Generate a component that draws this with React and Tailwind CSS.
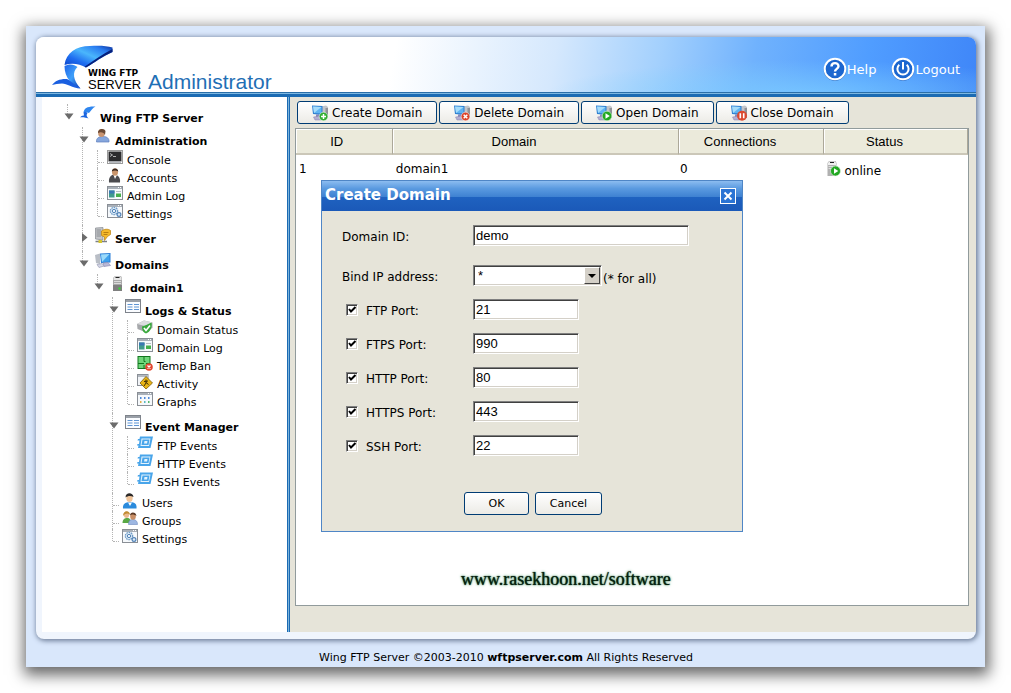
import React, { useState } from 'react';

const WingLogo = ({ className }) => (
  <svg viewBox="0 0 62 44" className={className} aria-hidden="true">
    <defs>
      <linearGradient id="wingTop" x1="0" y1="1" x2="1" y2="0">
        <stop offset="0" stopColor="#0a3fc4" />
        <stop offset="0.3" stopColor="#1f6df0" />
        <stop offset="0.55" stopColor="#4ab6fc" />
        <stop offset="0.8" stopColor="#2a7cf0" />
        <stop offset="1" stopColor="#0b2f9c" />
      </linearGradient>
      <linearGradient id="wingTail" x1="0" y1="0" x2="1" y2="1">
        <stop offset="0" stopColor="#1d63e8" />
        <stop offset="0.5" stopColor="#3fa0fa" />
        <stop offset="1" stopColor="#0c38b0" />
      </linearGradient>
    </defs>
    <path d="M12.500 20C14 8 24 1 38 1C46 0.500 54 0.500 60.500 2.500L60.500 7C51 11 42 18 34 22.500C28 19 20 17.500 12.500 20Z" fill="url(#wingTop)" />
    <path d="M60.500 4V7C51 11 42 18 34 22.500L32.500 21.700C41 16 51 9 60.500 4Z" fill="#06207c" />
    <path d="M12.500 21C17 18.500 22 19 25.500 22C20 27 21 35 28.500 43.500C20 40 12.500 33 12.500 21Z" fill="url(#wingTail)" />
    <path d="M0 40C3 35.500 9 33.500 15 34C19 36 23 40 28.500 43.500C20 43 15 38.500 10 38.500C6 38.500 3 39.500 0 40Z" fill="#1a5fe0" />
  </svg>
);

const HelpIcon = () => (
  <svg viewBox="0 0 24 24" className="h-6 w-6" aria-hidden="true">
    <circle cx="12" cy="12.500" r="11.300" fill="#0d3f93" opacity="0.6" />
    <circle cx="12" cy="12" r="10.300" fill="#1c66cf" stroke="#fff" strokeWidth="2" />
    <path d="M8.500 9.500C8.500 5 15.500 5 15.500 9.300C15.500 11.800 12 12 12 14.500" fill="none" stroke="#fff" strokeWidth="2.400" />
    <rect x="10.800" y="16" width="2.500" height="2.500" fill="#fff" />
  </svg>
);

const PowerIcon = () => (
  <svg viewBox="0 0 24 24" className="h-6 w-6" aria-hidden="true">
    <circle cx="12" cy="12.500" r="11.300" fill="#0d3f93" opacity="0.6" />
    <circle cx="12" cy="12" r="10.300" fill="#1c66cf" stroke="#fff" strokeWidth="2" />
    <path d="M8.300 7.800A5.600 5.600 0 1 0 15.700 7.800" fill="none" stroke="#fff" strokeWidth="2" />
    <path d="M12 5V12.500" stroke="#fff" strokeWidth="2" />
  </svg>
);

const windowFrame = (
  <>
    <rect x="0.500" y="0.500" width="15" height="13" fill="#f6f9fc" stroke="#8a8f96" />
    <rect x="1" y="1" width="14" height="2" fill="#a9b0b8" />
    <rect x="11" y="1" width="1" height="1" fill="#fff" />
    <rect x="13" y="1" width="1" height="1" fill="#fff" />
  </>
);

const computer = (
  <>
    <path d="M9 1.500L14 0.500L16 2V13H9Z" fill="#c3c5c9" />
    <path d="M13.500 3H16V13H13.500Z" fill="#8f9298" />
    <path d="M4 9.500H9V12H4Z" fill="#8b86b8" />
    <path d="M0 0.500L10.500 1V10L1 9Z" fill="#2f7fd0" />
    <path d="M1 1.500L9.500 2V8.500L2 8Z" fill="#5fb4f2" />
    <path d="M1 1.500L9.500 2L2 8Z" fill="#a5dcfb" />
    <path d="M1.500 12L8 11L9 15H3Z" fill="#b3aed2" stroke="#8580ad" strokeWidth="0.500" />
  </>
);

const drawings = {
  wing: (
    <g>
      <path d="M3.500 6.500C4 2 8 0 15.500 0.500C12.500 2 11 4.500 9 7C7 6 5 6 3.500 6.500Z" fill="#2f86ef" />
      <path d="M3.500 6.500C5 5.800 6.500 6 7.500 7C6 9 6.500 10.500 8.500 12.500C6.500 12 3 11 0 11.500C1 10 2.500 9.300 4 9.500Z" fill="#1b66e0" />
    </g>
  ),
  admin: (
    <g>
      <path d="M1.500 13C1 9 4 7.500 8 7.500C12 7.500 14.500 9.500 14 13Z" fill="#86a6dc" stroke="#5f7fbd" strokeWidth="0.700" />
      <ellipse cx="6.500" cy="4" rx="3.400" ry="4" fill="#c99470" />
      <path d="M3 4C2.500 -0.500 9.500 -1.500 10.500 2L10 6C9 3.500 6 2.500 3 4Z" fill="#6b4a35" />
    </g>
  ),
  console: (
    <g>
      <rect x="0.500" y="0.500" width="15" height="13" fill="#fff" stroke="#9a9a9a" />
      <rect x="1.500" y="1.500" width="13" height="10" fill="#2c2c2e" />
      <path d="M3 3.500L5.500 5L3 6.500M6 6.500H9" stroke="#d5d5d5" fill="none" strokeWidth="0.800" />
      <rect x="2" y="11.500" width="12" height="1.500" fill="#b9bcc1" />
    </g>
  ),
  accounts: (
    <g>
      <path d="M2 14.500C1.500 9 4 7 7 6.500C11 7 13.500 9 13 14.500Z" fill="#4b4b4f" />
      <path d="M6.500 7L8 11L10 7Z" fill="#fff" />
      <ellipse cx="8" cy="4" rx="3" ry="3.800" fill="#c9956c" />
      <path d="M4.800 3.500C5 -0.500 11 -0.500 11.300 3.500C9 2 7 2 4.800 3.500Z" fill="#3b2a22" />
    </g>
  ),
  log: (
    <g>
      {windowFrame}
      <rect x="2" y="4.500" width="5.500" height="7" fill="#3f9a8c" />
      <rect x="2" y="4.500" width="5.500" height="3" fill="#3a78b3" />
      <rect x="9" y="5" width="5" height="1" fill="#b6bcc4" />
      <rect x="9" y="7.500" width="5" height="3.500" fill="#46b04c" />
    </g>
  ),
  settings: (
    <g>
      {windowFrame}
      <circle cx="7" cy="7" r="3.600" fill="#e6f1fb" stroke="#6f9cc7" strokeWidth="1.400" strokeDasharray="1.600 0.700" />
      <circle cx="7" cy="7" r="1.700" fill="none" stroke="#5585b8" />
      <circle cx="12" cy="10.500" r="1.900" fill="#dcebf9" stroke="#5585b8" strokeWidth="1.200" />
    </g>
  ),
  server: (
    <g>
      <path d="M0.500 1L8 0.500V13L0.500 12Z" fill="#c3c5c8" stroke="#85898f" strokeWidth="0.700" />
      <path d="M1.500 3H6M1.500 5H6M1.500 7H6M1.500 9H6" stroke="#7c8086" strokeWidth="0.800" />
      <path d="M0.500 14.500H12" stroke="#7c8086" strokeWidth="1.400" />
      <rect x="3.500" y="13" width="3.500" height="3" fill="#d5c52c" />
      <path d="M6.500 4C9 2 13 1.500 15.500 3.500V7.500L12.500 9.500L9.500 13.500V10L6.500 8.500Z" fill="#f5b92b" stroke="#b9800f" strokeWidth="0.700" />
      <path d="M8.500 5.500H13.500M8.500 7.500H12.500" stroke="#a8700a" strokeWidth="0.800" />
    </g>
  ),
  domains: (
    <g>
      <path d="M0 2L5 0.500V11L1 10Z" fill="#b9bec6" />
      <path d="M5 0.500L15.500 0V9.500L6 10Z" fill="#2b7fd8" />
      <path d="M6 1.500L14.500 1V8.500L7 9Z" fill="#3fa2ec" />
      <path d="M6 1.500L14.500 1L7 9Z" fill="#9bdafa" />
      <path d="M8 10L13 9.500L15.500 12.500L9 13.500Z" fill="#b9b9d8" stroke="#8f8fb8" strokeWidth="0.700" />
      <path d="M2 11.500L7 10.500L9 13L4 14.500Z" fill="#d5d6e6" stroke="#9b9fb8" strokeWidth="0.700" />
    </g>
  ),
  tower: (
    <g>
      <path d="M3 2L5 0H11L12 2V15H3Z" fill="#a9a9a9" />
      <path d="M3.500 2L5 0.500H10.500L11.500 2V4H3.500Z" fill="#e6e6e6" />
      <rect x="5.500" y="1" width="4" height="1" fill="#222" />
      <path d="M4 5.500H11M4 7.500H11" stroke="#dcdcdc" />
      <rect x="3" y="9" width="9" height="6" fill="#7f7f7f" />
      <rect x="8.500" y="11.500" width="2" height="2" fill="#2fe02f" />
    </g>
  ),
  list: (
    <g>
      <rect x="0.500" y="0.500" width="15" height="13" fill="#fafcff" stroke="#7e838b" />
      <rect x="1" y="1" width="14" height="2" fill="#9aa0a8" />
      <path d="M2.500 5.500H7.500M2.500 8H7.500M2.500 10.500H7.500M9 5.500H14M9 8H14M9 10.500H14" stroke="#5f95d4" />
    </g>
  ),
  status: (
    <g>
      <path d="M0 4L7 0.500L15.500 2.500V8L8 12L0.500 9Z" fill="#a6a8ab" />
      <path d="M0 4L7 0.500L15.500 2.500L8 6Z" fill="#dcdddf" />
      <path d="M5 6.500C8 6 12 3.500 14.500 2.500C15.500 8 13 12 9 13.500C6 12.500 5 10 5 6.500Z" fill="#39a93c" />
      <path d="M7 8L9 10.500L13 5.500" fill="none" stroke="#fff" strokeWidth="1.600" />
    </g>
  ),
  ban: (
    <g>
      <rect x="1" y="0.500" width="12" height="12" fill="#6fd67a" stroke="#12761f" />
      <path d="M7 1V5.500H8.500M1 7.500H7M9 7.500H13M7 9V12" stroke="#12761f" fill="none" />
      <circle cx="12" cy="11" r="3.800" fill="#e2472f" />
      <path d="M10.500 9.500L13.500 12.500M13.500 9.500L10.500 12.500" stroke="#fff" strokeWidth="1.300" />
    </g>
  ),
  activity: (
    <g>
      <rect x="0.500" y="0.500" width="10.500" height="11" fill="#f2f4f7" stroke="#8a8f96" />
      <rect x="1" y="1" width="9.500" height="2" fill="#b3b9c1" />
      <path d="M9 2.500L15.500 9L9 15L3 9Z" fill="#e8b417" stroke="#7d5d07" strokeWidth="0.800" />
      <path d="M9 5.500L9 9L7 12M9 8.500L11.500 10.500M7 7.500L11 7" fill="none" stroke="#3b2c05" />
    </g>
  ),
  graphs: (
    <g>
      {windowFrame}
      <path d="M3 6H4.500M7 6H8.500M11 6H12.500" stroke="#4f88d8" strokeWidth="2" />
      <path d="M3 10H4.500" stroke="#e2b04a" strokeWidth="2" />
      <path d="M7 10H8.500" stroke="#58b8c0" strokeWidth="2" />
      <path d="M11 10H12.500" stroke="#59b86a" strokeWidth="2" />
    </g>
  ),
  event: (
    <g>
      <path d="M3 0.500H16L13.500 12H1L1.500 9.500H0L0.500 8H2L2.500 4.500H0.500L1 3H2.500Z" fill="#49a5ea" />
      <path d="M4.500 2.500H13.500L12 10H3.500Z" fill="#e4f3fd" />
      <path d="M5.500 3.500H12.500L11.500 9H4.500Z" fill="#49a5ea" />
      <path d="M7.500 5H10.500L10 7.500H7Z" fill="#e4f3fd" />
    </g>
  ),
  user: (
    <g>
      <path d="M1 15.500C0.500 11 3 9.500 8 9C13 9.500 15 11 14.500 15.500Z" fill="#2b8bdc" />
      <path d="M6 9.500L8 13L10 9.500Z" fill="#fff" />
      <ellipse cx="7.500" cy="5" rx="3.200" ry="4" fill="#f0c49a" />
      <path d="M3.500 4.500C3.500 -1 11 -1 11.500 4C9 2.500 6 2.500 3.500 4.500Z" fill="#2d2a29" />
    </g>
  ),
  groups: (
    <g>
      <path d="M0.500 12C0.500 8 3 7 5 7C8 7 9 9 9 12Z" fill="#59a845" />
      <path d="M6.500 13.500C6.500 9.500 8.500 8.500 11 8.500C14 8.500 15.500 10.500 15.500 13.500Z" fill="#9db7e2" stroke="#6d8ac0" strokeWidth="0.600" />
      <ellipse cx="4.500" cy="3.800" rx="2.600" ry="3.300" fill="#eab98e" />
      <path d="M1 5C1 -1 8 -1 8 4C6 2 4 2 1 5Z" fill="#c18c33" />
      <ellipse cx="11" cy="5.500" rx="2.800" ry="3.300" fill="#c98f66" />
      <path d="M8 4.500C8 0.500 14 0.500 14.500 5C12 3.500 10 3 8 4.500Z" fill="#5d3a26" />
    </g>
  ),
  create: (
    <g>
      {computer}
      <circle cx="11.500" cy="11.500" r="4.300" fill="#2fae2f" stroke="#fff" strokeWidth="0.500" />
      <path d="M9 11.500H14M11.500 9V14" stroke="#fff" strokeWidth="1.500" />
    </g>
  ),
  remove: (
    <g>
      {computer}
      <circle cx="11.500" cy="11.500" r="4.300" fill="#dc4328" stroke="#fff" strokeWidth="0.500" />
      <path d="M9.700 9.700L13.300 13.300M13.300 9.700L9.700 13.300" stroke="#fff" strokeWidth="1.500" />
    </g>
  ),
  open: (
    <g>
      {computer}
      <circle cx="11" cy="11" r="4.800" fill="#22a822" stroke="#e3f5e0" strokeWidth="0.600" />
      <path d="M9.500 8.300L13.800 11L9.500 13.700Z" fill="#fff" />
    </g>
  ),
  close: (
    <g>
      {computer}
      <circle cx="11" cy="10.800" r="5" fill="#dc4a30" />
      <path d="M9.300 8.300V13.300M12.700 8.300V13.300" stroke="#fff" strokeWidth="1.600" />
    </g>
  ),
  online: (
    <g>
      <path d="M0.500 2L2 0H8.500L9.500 2V15H0.500Z" fill="#b0b0b0" />
      <path d="M1 2L2.500 0.500H8L9 2V4H1Z" fill="#efefef" />
      <rect x="3" y="1" width="4" height="1" fill="#222" />
      <path d="M1.500 5.500H8M1.500 7.500H8" stroke="#dcdcdc" />
      <circle cx="8.500" cy="10" r="5" fill="#22a822" stroke="#e3f5e0" strokeWidth="0.600" />
      <path d="M7 7.300L11.300 10L7 12.700Z" fill="#fff" />
    </g>
  )
};

const Icon = ({ name, className = '' }) => (
  <svg viewBox="0 0 16 16" className={`h-4 w-4 shrink-0 overflow-visible ${className}`} aria-hidden="true">
    {drawings[name]}
  </svg>
);

const tree = [
  {
    label: 'Wing FTP Server',
    icon: 'wing',
    children: [
      {
        label: 'Administration',
        icon: 'admin',
        children: [
          { label: 'Console', icon: 'console' },
          { label: 'Accounts', icon: 'accounts' },
          { label: 'Admin Log', icon: 'log' },
          { label: 'Settings', icon: 'settings' }
        ]
      },
      { label: 'Server', icon: 'server', collapsed: true, children: [] },
      {
        label: 'Domains',
        icon: 'domains',
        children: [
          {
            label: 'domain1',
            icon: 'tower',
            children: [
              {
                label: 'Logs & Status',
                icon: 'list',
                children: [
                  { label: 'Domain Status', icon: 'status' },
                  { label: 'Domain Log', icon: 'log' },
                  { label: 'Temp Ban', icon: 'ban' },
                  { label: 'Activity', icon: 'activity' },
                  { label: 'Graphs', icon: 'graphs' }
                ]
              },
              {
                label: 'Event Manager',
                icon: 'list',
                children: [
                  { label: 'FTP Events', icon: 'event' },
                  { label: 'HTTP Events', icon: 'event' },
                  { label: 'SSH Events', icon: 'event' }
                ]
              },
              { label: 'Users', icon: 'user' },
              { label: 'Groups', icon: 'groups' },
              { label: 'Settings', icon: 'settings' }
            ]
          }
        ]
      }
    ]
  }
];

const TreeNode = ({ node, last }) => {
  const [open, setOpen] = useState(!node.collapsed);

  if (!node.children) {
    return (
      <li className="relative flex h-[18px] items-start gap-1 pl-[13px]">
        <span className={`absolute left-[3px] top-0 border-l border-dotted border-[#b4b4b4] ${last ? 'h-3' : 'h-full'}`} />
        <span className="absolute left-1 top-3 w-[6px] border-t border-dotted border-[#b4b4b4]" />
        <Icon name={node.icon} />
        <a href="#" className="text-[11px] leading-[22px] whitespace-nowrap">{node.label}</a>
      </li>
    );
  }

  const leavesOnly = node.children.every((child) => !child.children);

  return (
    <li className={leavesOnly ? 'relative pb-[3px]' : 'relative'}>
      <span className={`absolute left-[3px] top-0 border-l border-dotted border-[#b4b4b4] ${last ? 'h-3' : 'h-full'}`} />
      <div className="flex h-[23px] items-start">
        <button
          type="button"
          aria-label={`Toggle ${node.label}`}
          onClick={() => setOpen(!open)}
          className="relative mt-2 mr-[6px] flex h-[10px] w-[10px] items-center justify-center"
        >
          <svg viewBox="0 0 10 10" className="h-[10px] w-[10px]" aria-hidden="true">
            <path d={open ? 'M0.500 1.500H9.500L5 7.500Z' : 'M3 0L8.500 4.500L3 9Z'} fill="#6b6b6b" />
          </svg>
        </button>
        <Icon name={node.icon} className="mt-[2px]" />
        <a href="#" className="ml-1 text-[11px] leading-[30px] font-bold whitespace-nowrap">{node.label}</a>
      </div>
      {open && (
        <ul className="ml-[15px]">
          {node.children.map((child, index) => (
            <TreeNode key={child.label} node={child} last={index === node.children.length - 1} />
          ))}
        </ul>
      )}
    </li>
  );
};

const toolbar = [
  { label: 'Create Domain', icon: 'create' },
  { label: 'Delete Domain', icon: 'remove' },
  { label: 'Open Domain', icon: 'open' },
  { label: 'Close Domain', icon: 'close' }
];

const ports = [
  { id: 'ftp', label: 'FTP Port:', value: '21' },
  { id: 'ftps', label: 'FTPS Port:', value: '990' },
  { id: 'http', label: 'HTTP Port:', value: '80' },
  { id: 'https', label: 'HTTPS Port:', value: '443' },
  { id: 'ssh', label: 'SSH Port:', value: '22' }
];

const buttonStyle = 'rounded-[3px] border border-[#003c74] bg-gradient-to-b from-white to-[#ecebe6]';
const fieldStyle =
  'h-[21px] border border-t-[#808080] border-l-[#808080] border-r-white border-b-white bg-white px-[2px] font-["Liberation_Sans",sans-serif] text-[13px] shadow-[inset_1px_1px_0_#404040,inset_-1px_-1px_0_#d4d0c8] outline-none';

const CreateDomainDialog = ({ onClose }) => (
  <form
    role="dialog"
    aria-label="Create Domain"
    onSubmit={(e) => e.preventDefault()}
    className="absolute left-[25px] top-[51px] w-[422px] border border-[#4f86c6] bg-[#e6e4d9]"
  >
    <div className="flex h-[30px] items-center justify-between bg-[linear-gradient(to_bottom,#8cbcf0_0%,#5a9ae0_25%,#3f82d2_52%,#1f62c0_54%,#1b59b8_100%)] pl-[3px] pr-[6px]">
      <h2 className="pb-[2px] text-[15px] font-bold text-white">Create Domain</h2>
      <button
        type="button"
        aria-label="Close dialog"
        onClick={onClose}
        className="flex h-4 w-4 items-center justify-center border border-white bg-[#2a74d4]"
      >
        <svg viewBox="0 0 10 10" className="h-[10px] w-[10px]" aria-hidden="true">
          <path d="M1.500 1.500L8.500 8.500M8.500 1.500L1.500 8.500" stroke="#fff" strokeWidth="2" />
        </svg>
      </button>
    </div>

    <div className="px-5 pt-[14px] pb-4 text-[12px]">
      <div className="flex h-[21px] items-center">
        <label htmlFor="domain-id" className="w-[131px] pt-[2px]">Domain ID:</label>
        <input id="domain-id" type="text" defaultValue="demo" className={`${fieldStyle} w-[216px]`} />
      </div>

      <div className="mt-[19px] flex h-[21px] items-center">
        <label htmlFor="bind-ip" className="w-[131px] pt-[2px]">Bind IP address:</label>
        <div className="grid w-[129px]">
          <select id="bind-ip" className={`${fieldStyle} col-start-1 row-start-1 w-full appearance-none pl-1`}>
            <option>*</option>
          </select>
          <span className="pointer-events-none col-start-1 row-start-1 mr-[2px] flex h-[17px] w-4 items-center justify-center self-center justify-self-end border border-t-white border-l-white border-r-[#404040] border-b-[#404040] bg-[#d4d0c8]">
            <svg viewBox="0 0 8 4" className="h-1 w-2" aria-hidden="true">
              <path d="M0 0H8L4 4Z" fill="#000" />
            </svg>
          </span>
        </div>
        <span className="ml-[1px] pt-[6px]">(* for all)</span>
      </div>

      <div className="mt-[13px] space-y-[13px]">
        {ports.map((port) => (
          <div key={port.id} className="flex h-[21px] items-center">
            <div className="flex w-[131px] items-center gap-2 pl-1">
              <span className="grid h-3 w-3">
                <input
                  id={`${port.id}-enabled`}
                  type="checkbox"
                  defaultChecked
                  className="peer col-start-1 row-start-1 h-3 w-3 appearance-none border border-t-[#808080] border-l-[#808080] border-r-white border-b-white bg-white shadow-[inset_1px_1px_0_#404040,inset_-1px_-1px_0_#d4d0c8]"
                />
                <svg viewBox="0 0 12 12" className="pointer-events-none invisible col-start-1 row-start-1 h-3 w-3 peer-checked:visible" aria-hidden="true">
                  <path d="M3 5L5 7.500L9.500 3" fill="none" stroke="#000" strokeWidth="2" />
                </svg>
              </span>
              <label htmlFor={`${port.id}-enabled`} className="pt-[3px]">{port.label}</label>
            </div>
            <input type="text" aria-label={port.label} defaultValue={port.value} className={`${fieldStyle} w-[106px]`} />
          </div>
        ))}
      </div>

      <div className="mt-9 flex justify-center gap-[6px] pl-[2px] text-[11px]">
        <button type="submit" className={`${buttonStyle} h-[23px] w-[65px] pt-[2px]`}>OK</button>
        <button type="button" onClick={onClose} className={`${buttonStyle} h-[23px] w-[67px] pt-[2px]`}>Cancel</button>
      </div>
    </div>
  </form>
);

const headStyle =
  'h-[26px] border-r border-b-2 border-r-[#aca899] border-b-[#cbc7b8] bg-[#ebeadb] px-0 pt-[2px] pb-0 font-normal shadow-[inset_1px_1px_0_#fff]';

const App = () => {
  const [dialogOpen, setDialogOpen] = useState(true);

  return (
    <div className='flex min-h-screen flex-col bg-white p-[26px] font-["DejaVu_Sans",Verdana,sans-serif] text-black'>
      <div className="flex flex-1 flex-col bg-[#d9e7fb] pt-[11px] pr-[9px] pl-[10px] shadow-[1px_5px_14px_3px_rgba(0,0,0,0.6)]">
        <div className="flex flex-1 flex-col overflow-hidden rounded-lg bg-[#f0f5fd] shadow-[1px_1px_5px_1px_#6f7f9a]">
          <header className="flex h-[60px] items-start justify-between border-b-[3px] border-[#1b6bb3] bg-[radial-gradient(ellipse_260px_34px_at_82%_100%,#7fd0ffb0,#7fd0ff00),linear-gradient(100deg,#fff_0%,#fff_38%,#d5e8fd_55%,#a3d0fd_66%,#70b2fd_76%,#509dff_88%,#3f86f8_100%)] pr-4 pl-4 shadow-[inset_0_-1px_0_#7db8e2,inset_0_-2px_0_#2a6ea8]">
            <h1 className="flex h-[55px] items-end">
              <WingLogo className="mt-2 h-[44px] w-[62px] self-start" />
              <span className="-ml-[26px] flex w-[52px] flex-col">
                <span className="text-[9px] leading-[9px] font-bold">WING FTP</span>
                <span className='font-["Liberation_Sans",sans-serif] text-[13px] leading-[14px]'>SERVER</span>
              </span>
              <span className='ml-2 font-["Liberation_Sans",sans-serif] text-[21px] leading-5 text-[#1f6fb5]'>Administrator</span>
            </h1>
            <nav className="flex gap-[15px] pt-5 text-[13px] text-white">
              <a href="#" className="flex items-center"><HelpIcon /><span className="pt-[1px]">Help</span></a>
              <a href="#" className="flex items-center"><PowerIcon /><span className="pt-[1px]">Logout</span></a>
            </nav>
          </header>

          <div className="mb-[7px] flex flex-1">
            <aside className="ml-[6px] w-[245px] shrink-0 bg-white pt-[7px] pl-[22px]">
              <ul>
                {tree.map((node) => (
                  <TreeNode key={node.label} node={node} last />
                ))}
              </ul>
            </aside>
            <div className="w-[3px] shrink-0 border-x border-[#1b6bb3] bg-[#7db4dc]" />

            <main className="flex flex-1 flex-col bg-[#e6e4d9] pt-1 pr-[7px] pb-[26px] pl-[5px]">
              <div className="flex gap-[2px] pl-[2px]">
                {toolbar.map((item) => (
                  <button
                    key={item.label}
                    type="button"
                    onClick={() => item.icon === 'create' && setDialogOpen(true)}
                    className={`${buttonStyle} flex h-[23px] items-center gap-1 px-[14px] text-[12px] whitespace-nowrap`}
                  >
                    <Icon name={item.icon} />
                    {item.label}
                  </button>
                ))}
              </div>

              <section className="relative mt-1 flex flex-1 flex-col border border-[#919b9c] bg-white">
                <table className="w-full table-fixed border-separate border-spacing-0 text-left">
                  <colgroup>
                    <col className="w-[14.4%]" />
                    <col className="w-[42.6%]" />
                    <col className="w-[21.5%]" />
                    <col className="w-[21.5%]" />
                  </colgroup>
                  <thead className='font-["Liberation_Sans",sans-serif] text-[13px]'>
                    <tr>
                      {['ID', 'Domain', 'Connections', 'Status'].map((title) => (
                        <th key={title} scope="col" className={headStyle}>
                          <div className="w-[85%] text-center">{title}</div>
                        </th>
                      ))}
                    </tr>
                  </thead>
                  <tbody className="text-[12px]">
                    <tr className="h-7">
                      <td className="px-[3px] py-0">1</td>
                      <td className="px-[3px] py-0">domain1</td>
                      <td className="px-[1px] py-0">0</td>
                      <td className="px-[3px] py-0">
                        <span className="flex items-center gap-[2px]">
                          <Icon name="online" />
                          <span className="pt-1">online</span>
                        </span>
                      </td>
                    </tr>
                  </tbody>
                </table>

                <p className='mt-auto ml-[165px] pb-4 font-["Liberation_Serif",serif] text-[18px] leading-5 text-[#06210f] [text-shadow:0_0_1px_#06210f,0_0_3px_#3f9a63]'>
                  www.rasekhoon.net/software
                </p>

                {dialogOpen && <CreateDomainDialog onClose={() => setDialogOpen(false)} />}
              </section>
            </main>
          </div>
        </div>

        <footer className="flex h-7 items-center justify-center pt-[10px] text-[11px]">
          <p>
            Wing FTP Server ©2003-2010 <a href="#" className="font-bold">wftpserver.com</a> All Rights Reserved
          </p>
        </footer>
      </div>
    </div>
  );
};

export default App;
